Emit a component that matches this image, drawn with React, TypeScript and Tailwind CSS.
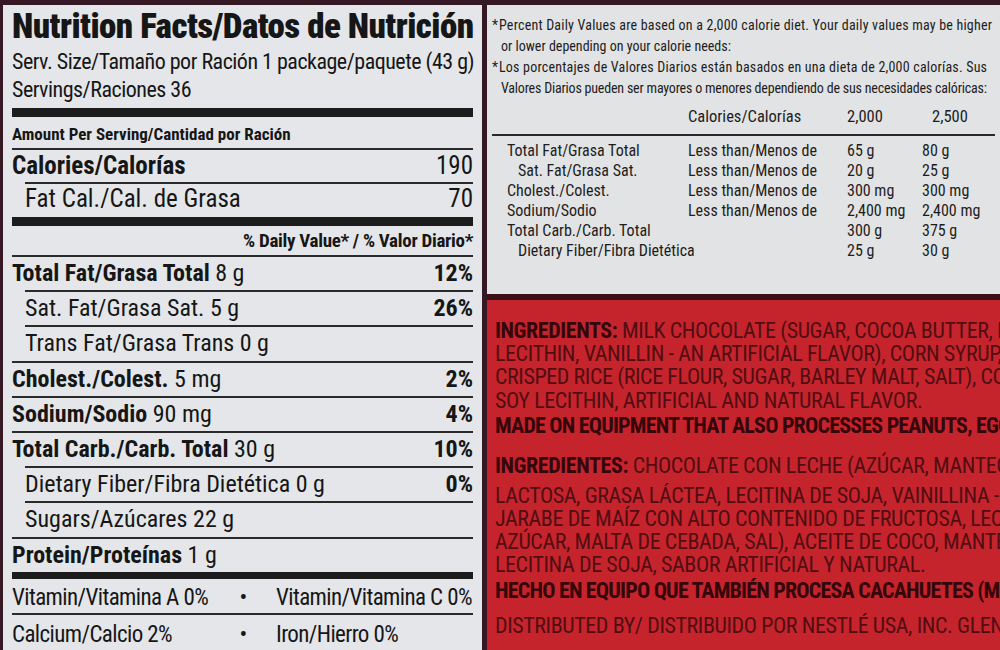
type RowProps = {
  label: string;
  amount?: string;
  dv?: string;
  indent?: boolean;
};

const nutrients: RowProps[] = [
  { label: "Total Fat/Grasa Total", amount: "8 g", dv: "12%" },
  { label: "Sat. Fat/Grasa Sat.", amount: "5 g", dv: "26%", indent: true },
  { label: "Trans Fat/Grasa Trans", amount: "0 g", indent: true },
  { label: "Cholest./Colest.", amount: "5 mg", dv: "2%" },
  { label: "Sodium/Sodio", amount: "90 mg", dv: "4%" },
  { label: "Total Carb./Carb. Total", amount: "30 g", dv: "10%" },
  { label: "Dietary Fiber/Fibra Dietética", amount: "0 g", dv: "0%", indent: true },
  { label: "Sugars/Azúcares", amount: "22 g", indent: true },
];

const dailyRows = [
  { label: "Total Fat/Grasa Total", less: true, a: "65 g", b: "80 g" },
  { label: "Sat. Fat/Grasa Sat.", less: true, a: "20 g", b: "25 g", indent: true },
  { label: "Cholest./Colest.", less: true, a: "300 mg", b: "300 mg" },
  { label: "Sodium/Sodio", less: true, a: "2,400 mg", b: "2,400 mg" },
  { label: "Total Carb./Carb. Total", less: false, a: "300 g", b: "375 g" },
  { label: "Dietary Fiber/Fibra Dietética", less: false, a: "25 g", b: "30 g", indent: true },
];

function NutrientRow({ label, amount, dv, indent }: RowProps) {
  return (
    <div
      className={
        indent
          ? "ml-[13px] flex h-[35.2px] items-start justify-between border-t-2 border-[#2a2a2a] text-[24px] leading-[33px]"
          : "flex h-[35.2px] items-start justify-between border-t-2 border-[#2a2a2a] text-[24px] leading-[33px]"
      }
    >
      <span className="whitespace-nowrap">
        {indent ? <span>{label}</span> : <span className="font-bold">{label}</span>} {amount}
      </span>
      {dv && <span className="font-bold">{dv}</span>}
    </div>
  );
}

function NutritionPanel() {
  return (
    <div className="ml-[3px] w-[479px] shrink-0 bg-[#e4e6e9] px-[9px] text-[#161616]">
      <div className="h-[43px] whitespace-nowrap text-[35px] font-black leading-[43px] tracking-[-0.55px]">
        Nutrition Facts/Datos de Nutrición
      </div>
      <div className="h-[28px] whitespace-nowrap text-[22px] leading-[28px] tracking-[-0.5px]">
        Serv. Size/Tamaño por Ración 1 package/paquete (43 g)
      </div>
      <div className="h-[28px] whitespace-nowrap text-[22px] leading-[28px] tracking-[-0.5px]">Servings/Raciones 36</div>
      <div className="mt-[4px] h-[9px] bg-[#1c1c1c]" />
      <div className="h-[31px] text-[17px] font-bold leading-[34px]">Amount Per Serving/Cantidad por Ración</div>
      <div className="flex h-[34px] justify-between border-t-2 border-[#2a2a2a] text-[25px] leading-[32px]">
        <span className="font-bold">Calories/Calorías</span>
        <span>190</span>
      </div>
      <div className="ml-[13px] flex h-[35px] justify-between border-t-2 border-[#2a2a2a] text-[25px] leading-[29px]">
        <span>Fat Cal./Cal. de Grasa</span>
        <span>70</span>
      </div>
      <div className="h-[9px] bg-[#1c1c1c]" />
      <div className="h-[29px] text-right text-[19px] font-bold leading-[29px] tracking-[-0.3px]">
        % Daily Value* / % Valor Diario*
      </div>
      {nutrients.map((n) => (
        <NutrientRow key={n.label} {...n} />
      ))}
      <div className="flex h-[35.2px] border-t-2 border-[#2a2a2a] text-[24px] leading-[33px]">
        <span className="whitespace-nowrap">
          <span className="font-bold">Protein/Proteínas</span> 1 g
        </span>
      </div>
      <div className="h-[7px] bg-[#1c1c1c]" />
      <div className="grid h-[34px] grid-cols-[216px_30px_1fr] text-[23px] leading-[38px] tracking-[-0.6px]">
        <span className="whitespace-nowrap">Vitamin/Vitamina A 0%</span>
        <span className="text-center">•</span>
        <span className="whitespace-nowrap pl-[18px]">Vitamin/Vitamina C 0%</span>
      </div>
      <div className="grid h-[40px] grid-cols-[216px_30px_1fr] border-t-2 border-[#2a2a2a] text-[23px] leading-[40px] tracking-[-0.6px]">
        <span className="whitespace-nowrap">Calcium/Calcio 2%</span>
        <span className="text-center">•</span>
        <span className="whitespace-nowrap pl-[18px]">Iron/Hierro 0%</span>
      </div>
    </div>
  );
}

function DailyValues() {
  return (
    <div className="h-[289px] bg-[#e2e3e4] pl-[5px] pr-[5px] pt-[10px] text-[#1d1d1d]">
      <div className="text-[14px] leading-[21px]">
        <div className="flex whitespace-nowrap">
          <span className="w-[7px]">*</span>
          <span>
            <span className="tracking-[0.2px]">
              Percent Daily Values are based on a 2,000 calorie diet. Your daily values may be higher
            </span>
            <br />
            <span className="pl-[2px]">or lower depending on your calorie needs:</span>
          </span>
        </div>
        <div className="flex whitespace-nowrap">
          <span className="w-[7px]">*</span>
          <span>
            <span className="tracking-[0.2px]">
              Los porcentajes de Valores Diarios están basados en una dieta de 2,000 calorías. Sus
            </span>
            <br />
            <span className="pl-[2px] tracking-[-0.2px]">
              Valores Diarios pueden ser mayores o menores dependiendo de sus necesidades calóricas:
            </span>
          </span>
        </div>
      </div>
      <div className="mt-[6px] grid h-[24px] grid-cols-[196px_159px_85px_1fr] text-[16.5px] leading-[24px]">
        <span />
        <span>Calories/Calorías</span>
        <span>2,000</span>
        <span>2,500</span>
      </div>
      <div className="mt-[5px] h-[2px] bg-[#2a2a2a]" />
      <div className="mt-[5px] text-[16px] leading-[20px]">
        {dailyRows.map((r) => (
          <div key={r.label} className="grid h-[20px] grid-cols-[196px_159px_75px_1fr] whitespace-nowrap">
            <span className={r.indent ? "pl-[26px]" : "pl-[15px]"}>{r.label}</span>
            <span>{r.less ? "Less than/Menos de" : ""}</span>
            <span>{r.a}</span>
            <span>{r.b}</span>
          </div>
        ))}
      </div>
    </div>
  );
}

function Ingredients() {
  return (
    <div className="flex-1 overflow-hidden border-t-[6px] border-[#3a1117] bg-[#c5242c] pl-[8px] pt-[19px] text-[22px] uppercase leading-[23px] tracking-[-0.4px] text-[#520d12]">
      <div className="h-[23px] whitespace-nowrap">
        <b className="text-[#35060a]">INGREDIENTS:</b> MILK CHOCOLATE (SUGAR, COCOA BUTTER, MILK,
      </div>
      <div className="h-[23px] whitespace-nowrap">LECITHIN, VANILLIN - AN ARTIFICIAL FLAVOR), CORN SYRUP,</div>
      <div className="h-[23px] whitespace-nowrap">CRISPED RICE (RICE FLOUR, SUGAR, BARLEY MALT, SALT), COCONUT OIL,</div>
      <div className="mt-[1px] h-[23px] whitespace-nowrap">SOY LECITHIN, ARTIFICIAL AND NATURAL FLAVOR.</div>
      <div className="mt-[2px] h-[23px] whitespace-nowrap font-bold tracking-[-0.8px] text-[#35060a]">
        MADE ON EQUIPMENT THAT ALSO PROCESSES PEANUTS, EGGS
      </div>
      <div className="mt-[17px] h-[23px] whitespace-nowrap">
        <b className="text-[#35060a]">INGREDIENTES:</b> CHOCOLATE CON LECHE (AZÚCAR, MANTECA
      </div>
      <div className="mt-[7px] h-[23px] whitespace-nowrap">LACTOSA, GRASA LÁCTEA, LECITINA DE SOJA, VAINILLINA -</div>
      <div className="h-[23px] whitespace-nowrap">JARABE DE MAÍZ CON ALTO CONTENIDO DE FRUCTOSA, LECHE,</div>
      <div className="h-[23px] whitespace-nowrap">AZÚCAR, MALTA DE CEBADA, SAL), ACEITE DE COCO, MANTEQUILLA</div>
      <div className="h-[23px] whitespace-nowrap">LECITINA DE SOJA, SABOR ARTIFICIAL Y NATURAL.</div>
      <div className="mt-[3px] h-[23px] whitespace-nowrap font-bold tracking-[-0.8px] text-[#35060a]">
        HECHO EN EQUIPO QUE TAMBIÉN PROCESA CACAHUETES (MANÍ)
      </div>
      <div className="mt-[12px] h-[23px] whitespace-nowrap">DISTRIBUTED BY/ DISTRIBUIDO POR NESTLÉ USA, INC. GLENDALE</div>
    </div>
  );
}

export default function App() {
  return (
    <div className="flex h-[650px] w-[1000px] overflow-hidden bg-[#361824] pt-[5px] font-['Roboto_Condensed',sans-serif]">
      <NutritionPanel />
      <div className="ml-[5px] flex min-w-0 flex-1 flex-col">
        <DailyValues />
        <Ingredients />
      </div>
    </div>
  );
}
